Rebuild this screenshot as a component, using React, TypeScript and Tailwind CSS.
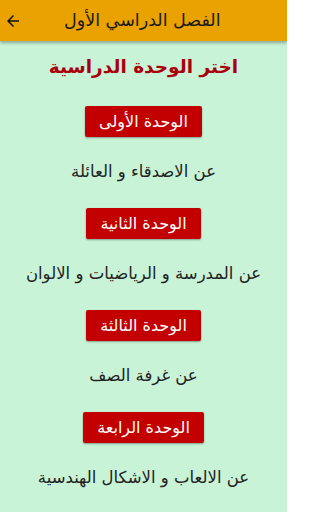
import React from "react";

const units = [
  { title: "الوحدة الأولى", desc: "عن الاصدقاء و العائلة" },
  { title: "الوحدة الثانية", desc: "عن المدرسة و الرياضيات و الالوان" },
  { title: "الوحدة الثالثة", desc: "عن غرفة الصف" },
  { title: "الوحدة الرابعة", desc: "عن الالعاب و الاشكال الهندسية" },
];

export default function App() {
  return (
    <div
      className="w-[287px] h-[512px] overflow-hidden bg-[#c8f3d7] flex flex-col"
      style={{ fontFamily: '"DejaVu Sans", "Noto Sans", sans-serif' }}
    >
      <div className="relative z-10 h-[41px] shrink-0 bg-[#e9a200] flex items-center shadow-[0_2px_3px_rgba(0,0,0,0.3)]">
        <svg
          className="ml-[4px] shrink-0"
          width="18"
          height="18"
          viewBox="0 0 24 24"
          fill="#111"
        >
          <path d="M20 11H7.83l5.59-5.59L12 4l-8 8 8 8 1.41-1.41L7.83 13H20v-2z" />
        </svg>
        <div dir="rtl" className="ml-[42px] text-[17.5px] text-[#1a1a1a] leading-none">
          الفصل الدراسي الأول
        </div>
      </div>
      <div dir="rtl" className="flex flex-col items-center">
        <div className="mt-[12px] h-[28px] text-[18.5px] leading-[28px] font-bold text-[#a8000c]">
          اختر الوحدة الدراسية
        </div>
        {units.map((u, i) => (
          <div key={i} className="flex flex-col items-center">
            <div
              className={`${i === 0 ? "mt-[25px]" : "mt-[24px]"} h-[31px] px-[14px] flex items-center justify-center bg-[#c30000] text-white text-[16px] rounded-[2px] shadow-[0_1px_2px_rgba(0,0,0,0.35)]`}
            >
              {u.title}
            </div>
            <div className="mt-[23px] h-[24px] leading-[24px] text-[16.5px] text-[#222]">
              {u.desc}
            </div>
          </div>
        ))}
      </div>
    </div>
  );
}
